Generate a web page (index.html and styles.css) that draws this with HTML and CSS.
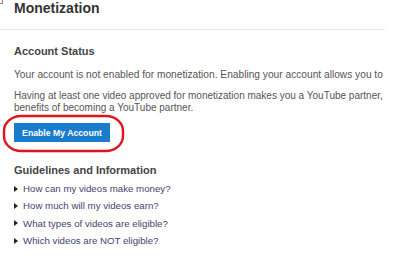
FILE: index.html
```html
<!DOCTYPE html>
<html>
<head>
<meta charset="utf-8">
<link rel="stylesheet" href="styles.css">
</head>
<body>
<div class="page">
  <div class="corner"></div>
  <h1 class="title">Monetization</h1>
  <div class="rule"></div>
  <h2 class="heading">Account Status</h2>
  <p class="text first">Your account is not enabled for monetization. Enabling your account allows you to</p>
  <p class="text second">Having at least one video approved for monetization makes you a YouTube partner,<br>benefits of becoming a YouTube partner.</p>
  <div class="btn-wrap">
    <button class="btn">Enable My Account</button>
    <svg class="circle" width="124" height="40" viewBox="0 0 124 40"><rect x="2" y="2" width="119" height="35" rx="17" ry="15" fill="none" stroke="#e0141e" stroke-width="2.4"/></svg>
  </div>
  <h2 class="heading guide">Guidelines and Information</h2>
  <ul class="list">
    <li><span class="tri"></span>How can my videos make money?</li>
    <li><span class="tri"></span>How much will my videos earn?</li>
    <li><span class="tri"></span>What types of videos are eligible?</li>
    <li><span class="tri"></span>Which videos are NOT eligible?</li>
  </ul>
</div>
</body>
</html>
```
FILE: styles.css
```css
html, body { margin: 0; padding: 0; background: #fff; }
body { font-family: "Liberation Sans", Arial, sans-serif; color: #555; overflow: hidden; }
.page { position: relative; width: 395px; height: 265px; }
.corner { position: absolute; left: 0; top: 0; width: 2px; height: 3px; border-right: 1px solid #888; border-bottom: 1px solid #888; }
.title { margin: 0; padding: 0 0 0 14px; font-size: 14px; line-height: 16px; font-weight: bold; color: #333; }
.rule { margin-top: 13px; width: 385px; height: 1px; background: #e6e6e6; }
.heading { margin: 15px 0 0 14px; font-size: 11px; line-height: 13px; font-weight: bold; color: #444; }
.text { margin: 0 0 0 14px; font-size: 10.2px; line-height: 12px; color: #555; white-space: nowrap; }
.first { margin-top: 11px; }
.second { margin-top: 9px; font-size: 10px; }
.btn-wrap { position: relative; margin: 9px 0 0 14px; height: 19px; }
.btn { display: block; width: 96px; height: 19px; padding: 0; border: 0; background: #1a7ccc; color: #fff; font-family: "Liberation Sans", Arial, sans-serif; font-size: 8.7px; font-weight: bold; }
.circle { position: absolute; left: -12px; top: -9px; }
.guide { margin-top: 22px; }
.list { list-style: none; margin: 3px 0 0 14px; padding: 0; }
.list li { display: flex; align-items: center; height: 17.3px; font-size: 9.7px; color: #44446a; }
.tri { width: 0; height: 0; border-left: 4px solid #222; border-top: 3.5px solid transparent; border-bottom: 3.5px solid transparent; margin-right: 5px; }
```
